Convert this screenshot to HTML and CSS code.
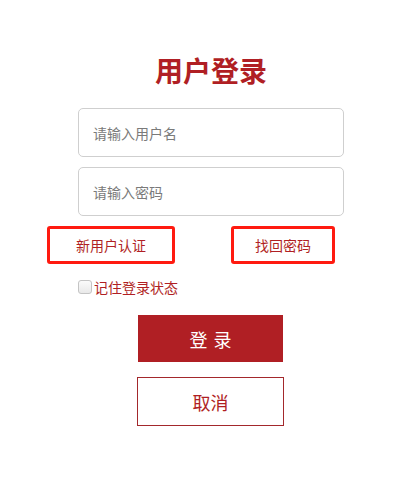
FILE: index.html
```html
<!DOCTYPE html>
<html lang="zh-CN">
<head>
<meta charset="utf-8">
<title>用户登录</title>
<link rel="stylesheet" href="styles.css">
</head>
<body>
<div class="login">
  <h1 class="title">用户登录</h1>
  <div class="field"><input class="input" type="text" placeholder="请输入用户名"></div>
  <div class="field"><input class="input" type="password" placeholder="请输入密码"></div>
  <div class="links">
    <a class="link link-reg" href="#">新用户认证</a>
    <a class="link link-find" href="#">找回密码</a>
  </div>
  <label class="remember"><input class="check" type="checkbox"><span>记住登录状态</span></label>
  <button class="btn btn-login" type="button">登录</button>
  <button class="btn btn-cancel" type="button">取消</button>
</div>
</body>
</html>
```

FILE: styles.css
```css
* { box-sizing: border-box; }
html, body { margin: 0; padding: 0; background: #fff; }
body {
  font-family: "Noto Sans CJK SC", "Noto Sans", sans-serif;
  width: 418px;
  height: 494px;
}
.login {
  width: 266px;
  margin-left: 78px;
  padding-top: 52px;
  display: flex;
  flex-direction: column;
}
.title {
  margin: 0 0 20px 0;
  text-align: center;
  font-size: 28px;
  line-height: 36px;
  font-weight: 700;
  color: #b01f24;
}
.field { margin-bottom: 10px; }
.input {
  display: block;
  width: 266px;
  height: 49px;
  border: 1px solid #cfcfcf;
  border-radius: 5px;
  padding: 0 14px;
  font-family: inherit;
  font-size: 14px;
  color: #333;
  outline: none;
}
.input::placeholder { color: #7a7a7a; }
.links {
  display: flex;
  margin-left: -31px;
  gap: 56px;
  height: 38px;
}
.link {
  display: flex;
  align-items: center;
  justify-content: center;
  height: 38px;
  border: 3px solid #ff1a10;
  border-radius: 3px;
  color: #b01f24;
  text-decoration: none;
  font-size: 14px;
}
.link-reg { width: 128px; }
.link-find { width: 104px; }
.remember {
  display: flex;
  align-items: center;
  margin-top: 16px;
  height: 14px;
  color: #b01f24;
  font-size: 14px;
  line-height: 14px;
}
.check {
  appearance: none;
  -webkit-appearance: none;
  width: 14px;
  height: 14px;
  margin: 0 2px 0 0;
  border: 1px solid #c4c4c4;
  border-radius: 3px;
  background: linear-gradient(#fbfbfb, #e9e9e9);
}
.btn {
  font-family: inherit;
  cursor: pointer;
  padding: 0;
  align-self: flex-start;
}
.btn-login {
  margin-top: 21px;
  margin-left: 60px;
  width: 145px;
  height: 47px;
  border: none;
  background: #b01f24;
  color: #fff;
  font-size: 18px;
  letter-spacing: 6px;
  text-indent: 6px;
}
.btn-cancel {
  margin-top: 15px;
  margin-left: 59px;
  width: 147px;
  height: 49px;
  border: 1px solid #a3282c;
  background: #fff;
  color: #b01f24;
  font-size: 18px;
}
```
